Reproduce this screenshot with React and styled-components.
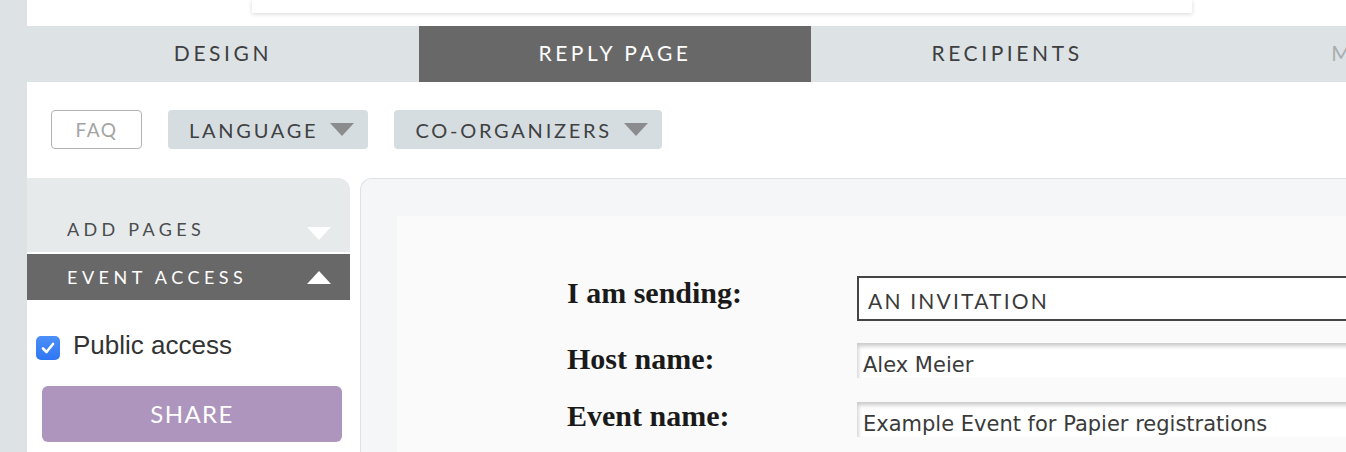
import React from 'react';
import styled, { createGlobalStyle } from 'styled-components';

const GlobalStyle = createGlobalStyle`
  html, body {
    margin: 0;
    padding: 0;
    background: #ffffff;
    overflow: hidden;
  }
  * {
    box-sizing: border-box;
  }
`;

const Page = styled.div`
  display: flex;
  width: 100vw;
  height: 100vh;
  overflow: hidden;
`;

const LeftStrip = styled.div`
  width: 27px;
  flex-shrink: 0;
  background: #dde2e5;
`;

const Main = styled.div`
  flex: 1;
  min-width: 0;
  display: flex;
  flex-direction: column;
  overflow: hidden;
`;

const PreviewArea = styled.div`
  height: 26px;
  flex-shrink: 0;
  padding-left: 225px;
`;

const PreviewSheet = styled.div`
  width: 940px;
  height: 13px;
  background: #ffffff;
  box-shadow: 0 1px 4px rgba(0, 0, 0, 0.16);
`;

const TabBar = styled.div`
  display: flex;
  height: 56px;
  flex-shrink: 0;
  background: #dde2e5;
`;

const Tab = styled.div`
  width: 392px;
  flex-shrink: 0;
  display: flex;
  align-items: center;
  justify-content: center;
  padding: 0 0 3px 0;
  font-family: Lato, "Open Sans", sans-serif;
  font-size: 21px;
  letter-spacing: 3.6px;
  background: ${({ active }) => (active ? '#686868' : 'transparent')};
  color: ${({ active, muted }) => (active ? '#ffffff' : muted ? '#a9adb0' : '#3d3f41')};
`;

const Toolbar = styled.div`
  display: flex;
  gap: 26px;
  padding: 28px 0 0 24px;
  height: 67px;
  flex-shrink: 0;
`;

const OutlineButton = styled.div`
  width: 91px;
  height: 39px;
  display: flex;
  align-items: center;
  justify-content: center;
  border: 1.5px solid #b3b3b3;
  border-radius: 4px;
  font-family: Lato, "Open Sans", sans-serif;
  font-size: 19px;
  letter-spacing: 1.6px;
  color: #a4a4a4;
`;

const DropButton = styled.div`
  height: 39px;
  display: flex;
  align-items: center;
  gap: 12px;
  padding: 0 14px 0 21px;
  background: #d6dde0;
  border-radius: 4px;
  font-family: Lato, "Open Sans", sans-serif;
  font-size: 20px;
  letter-spacing: 2.75px;
  color: #3f4143;
`;

const Triangle = styled.span`
  width: 0;
  height: 0;
  flex-shrink: 0;
  border-left: 12px solid transparent;
  border-right: 12px solid transparent;
  ${({ up, color }) =>
    up ? `border-bottom: 13px solid ${color};` : `border-top: 13px solid ${color};`}
`;

const Body = styled.div`
  display: flex;
  gap: 10px;
  margin-top: 29px;
  flex: 1;
  min-height: 0;
`;

const Sidebar = styled.div`
  width: 323px;
  flex-shrink: 0;
  display: flex;
  flex-direction: column;
`;

const SectionHeader = styled.div`
  display: flex;
  align-items: ${({ open }) => (open ? 'center' : 'flex-end')};
  justify-content: space-between;
  height: ${({ open }) => (open ? '46px' : '74px')};
  padding: ${({ open }) => (open ? '0 19px 0 40px' : '0 19px 12px 40px')};
  margin-bottom: ${({ open }) => (open ? '0' : '2px')};
  border-top-right-radius: ${({ open }) => (open ? '0' : '12px')};
  background: ${({ open }) => (open ? '#686868' : '#e6eaeb')};
  color: ${({ open }) => (open ? '#ffffff' : '#4a4c4e')};
  font-family: Lato, "Open Sans", sans-serif;
  font-size: 18px;
  letter-spacing: ${({ open }) => (open ? '4.5px' : '4.3px')};
`;

const CheckRow = styled.label`
  display: flex;
  align-items: flex-start;
  gap: 13px;
  margin: 32px 0 0 9px;
  font-family: "Liberation Sans", Arial, sans-serif;
  font-size: 26px;
  line-height: 26px;
  color: #333333;
`;

const CheckBox = styled.span`
  width: 24px;
  height: 24px;
  margin-top: 4px;
  flex-shrink: 0;
  display: flex;
  align-items: center;
  justify-content: center;
  border-radius: 5px;
  background: linear-gradient(#4c8ff8, #2f76f3);
`;

const ShareButton = styled.div`
  width: 300px;
  height: 56px;
  margin: 26px 0 0 15px;
  display: flex;
  align-items: center;
  justify-content: center;
  padding-bottom: 2px;
  border-radius: 6px;
  background: #ad95bd;
  color: #ffffff;
  font-family: Lato, "Open Sans", sans-serif;
  font-size: 24px;
  letter-spacing: 1.4px;
`;

const Panel = styled.div`
  flex: 1;
  min-width: 0;
  padding: 37px 0 0 36px;
  background: #f5f6f8;
  border: 1px solid #dde3e5;
  border-right: none;
  border-bottom: none;
  border-top-left-radius: 12px;
  display: flex;
`;

const Sheet = styled.div`
  flex: 1;
  background: #fafafa;
  padding: 60px 0 0 170px;
  display: flex;
  flex-direction: column;
`;

const FormRow = styled.div`
  display: flex;
  align-items: flex-start;
  margin-bottom: ${({ gap }) => gap}px;
`;

const Label = styled.div`
  width: 290px;
  flex-shrink: 0;
  margin-top: ${({ shift }) => shift}px;
  font-family: "Liberation Serif", "Times New Roman", serif;
  font-weight: bold;
  font-size: 30px;
  line-height: 34px;
  color: #1a1a1a;
`;

const SelectBox = styled.div`
  width: 620px;
  height: 45px;
  display: flex;
  align-items: center;
  padding: 3px 9px 0;
  border: 2px solid #444444;
  background: #ffffff;
  font-family: Lato, "Open Sans", sans-serif;
  font-size: 21px;
  letter-spacing: 2.2px;
  color: #3a3a3a;
`;

const Field = styled.input`
  width: 620px;
  height: 35px;
  padding: 8px 6px 0;
  border: none;
  outline: none;
  background: #ffffff;
  box-shadow: inset 1px 3px 4px rgba(0, 0, 0, 0.22);
  font-family: "DejaVu Sans", Verdana, sans-serif;
  font-size: 21px;
  color: #3a3a3a;
`;

const tabs = [
  { label: 'DESIGN' },
  { label: 'REPLY PAGE', active: true },
  { label: 'RECIPIENTS' },
  { label: 'MESSAGES', muted: true },
];

const CheckIcon = () => (
  <svg width="16" height="16" viewBox="0 0 16 16">
    <path d="M3 8.5 L6.5 12 L13 4" fill="none" stroke="#ffffff" strokeWidth="2.6" strokeLinecap="round" strokeLinejoin="round" />
  </svg>
);

export default function App() {
  return (
    <>
      <GlobalStyle />
      <Page>
        <LeftStrip />
        <Main>
          <PreviewArea>
            <PreviewSheet />
          </PreviewArea>
          <TabBar>
            {tabs.map((t) => (
              <Tab key={t.label} active={t.active} muted={t.muted}>
                {t.label}
              </Tab>
            ))}
          </TabBar>
          <Toolbar>
            <OutlineButton>FAQ</OutlineButton>
            <DropButton>
              LANGUAGE
              <Triangle color="#8a8c8e" />
            </DropButton>
            <DropButton>
              CO-ORGANIZERS
              <Triangle color="#8a8c8e" />
            </DropButton>
          </Toolbar>
          <Body>
            <Sidebar>
              <SectionHeader>
                ADD PAGES
                <Triangle color="#ffffff" />
              </SectionHeader>
              <SectionHeader open>
                EVENT ACCESS
                <Triangle up color="#ffffff" />
              </SectionHeader>
              <CheckRow>
                <CheckBox>
                  <CheckIcon />
                </CheckBox>
                Public access
              </CheckRow>
              <ShareButton>SHARE</ShareButton>
            </Sidebar>
            <Panel>
              <Sheet>
                <FormRow gap={22}>
                  <Label shift={0}>I am sending:</Label>
                  <SelectBox>AN INVITATION</SelectBox>
                </FormRow>
                <FormRow gap={24}>
                  <Label shift={-1}>Host name:</Label>
                  <Field readOnly value="Alex Meier" />
                </FormRow>
                <FormRow gap={0}>
                  <Label shift={-3}>Event name:</Label>
                  <Field readOnly value="Example Event for Papier registrations" />
                </FormRow>
              </Sheet>
            </Panel>
          </Body>
        </Main>
      </Page>
    </>
  );
}
